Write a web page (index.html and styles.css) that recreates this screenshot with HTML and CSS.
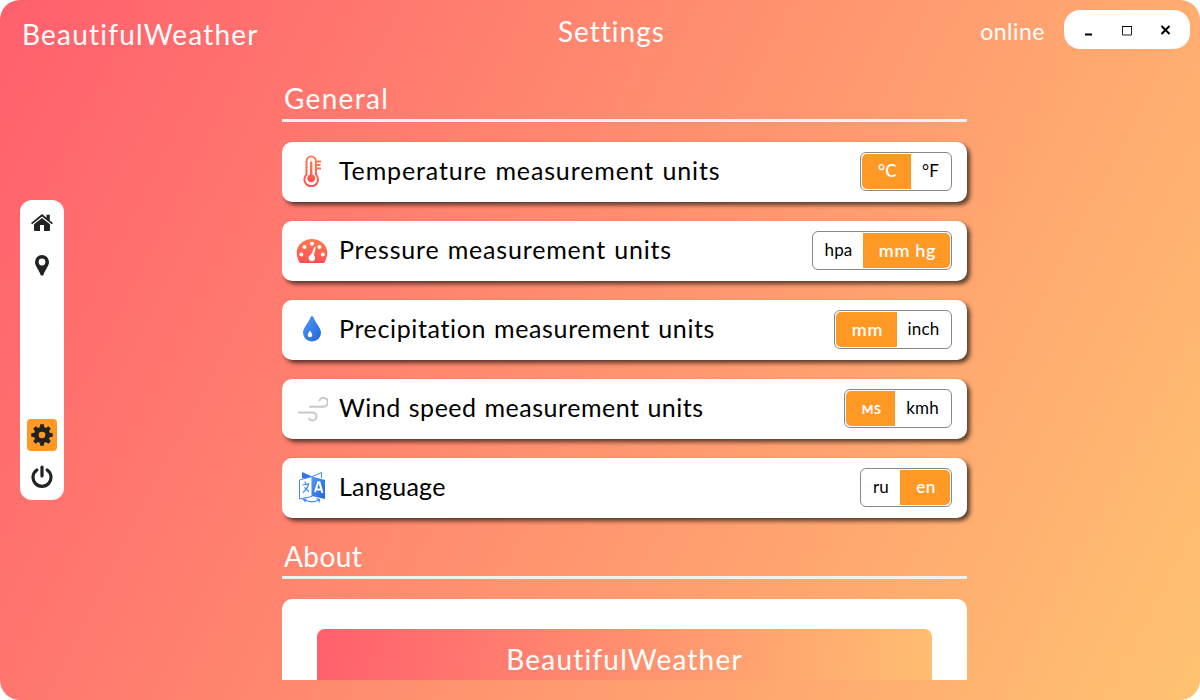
FILE: index.html
```html
<!DOCTYPE html>
<html lang="en">
<head>
<meta charset="utf-8">
<title>BeautifulWeather</title>
<link rel="stylesheet" href="styles.css">
</head>
<body>
<div class="window">
  <header class="topbar">
    <div class="brand">BeautifulWeather</div>
    <h1 class="title">Settings</h1>
    <div class="status">online</div>
    <div class="controls">
      <svg width="126" height="38" viewBox="0 0 126 38"><path d="M21 24.500h7" stroke="#000" stroke-width="2"/><path d="M58.500 16.500h9v8.500h-9z" fill="none" stroke="#222" stroke-width="1"/><path d="M58 16.500h10" stroke="#000"/><path d="M97.500 16l8 8M105.500 16l-8 8" stroke="#000" stroke-width="2"/></svg>
    </div>
  </header>
  <div class="body">
    <nav class="sidebar">
      <div class="nav-group">
        <a class="nav-item"><svg width="22" height="18" viewBox="0 0 22 18" fill="#222"><path d="M11 0l4.500 3.700V.7h3.300v5.800L22 9.100 20.900 10.300 11 2.500 1.100 10.300 0 9.100z"/><path d="M11 4l8 6.300V16q0 1-1 1h-5v-6H9v6H4q-1 0-1-1v-5.700z"/></svg></a>
        <a class="nav-item"><svg width="14" height="21" viewBox="0 0 14 21" fill="#222"><path fill-rule="evenodd" d="M7 0a7 7 0 0 1 7 7c0 4-4.500 9-5.400 12.500-.4 1.600-2.800 1.600-3.200 0C4.500 16 0 11 0 7a7 7 0 0 1 7-7zm0 3.600a3.400 3.400 0 1 0 0 6.800 3.400 3.400 0 0 0 0-6.800z"/></svg></a>
      </div>
      <div class="nav-group">
        <a class="nav-item active"><svg width="22" height="22" viewBox="-11 -11 22 22"><g fill="#222"><circle r="8"/><path id="tooth" d="M-2.300-7l.5-3.700h3.600l.5 3.700v14l-.5 3.700h-3.600l-.5-3.700z"/><use href="#tooth" transform="rotate(45)"/><use href="#tooth" transform="rotate(90)"/><use href="#tooth" transform="rotate(135)"/></g><circle r="3.300" fill="#ff9925"/></svg></a>
        <a class="nav-item"><svg width="22" height="23" viewBox="0 0 22 23" fill="none" stroke="#222" stroke-width="3.200" stroke-linecap="round"><path d="M11 2v9M5.800 5a9 9 0 1 0 10.400 0"/></svg></a>
      </div>
    </nav>
    <main class="content">
      <h2 class="heading general">General</h2>
      <section class="rows">
        <div class="row">
          <span class="icon"><svg width="32" height="32" viewBox="0 0 32 32"><defs><linearGradient id="warm" x2="0" y2="1"><stop stop-color="#ff7b50"/><stop offset="1" stop-color="#ff4f50"/></linearGradient></defs><g transform="translate(4)"><path d="M6.500 19.500V6.300a4.700 4.700 0 0 1 9.400 0v13.200a6.800 6.800 0 1 1-9.400 0z" fill="none" stroke="url(#warm)" stroke-width="2"/><path d="M10 19.500V7.500a1.200 1.200 0 0 1 2.400 0v12a4 4 0 1 1-2.400 0z" fill="url(#warm)"/><path d="M17 6.500h4M17 10h3.500M17 13.500h4" stroke="#ff704f" stroke-width="2"/></g></svg></span>
          <span class="label l1">Temperature measurement units</span>
          <div class="toggle t1"><span class="opt on">°C</span><span class="opt">°F</span></div>
        </div>
        <div class="row">
          <span class="icon"><svg width="32" height="32" viewBox="0 0 32 32"><path d="M3.600 28.400C-4 15 5 5 16 5s20 10 12.400 23.400q-.5.600-1.200.6H4.800q-.7 0-1.200-.6z" fill="url(#warm)"/><g fill="#fff"><circle cx="5.400" cy="20.500" r="2"/><circle cx="8.500" cy="13" r="2"/><circle cx="16" cy="9.700" r="2"/><circle cx="23.500" cy="13" r="2"/><circle cx="26.800" cy="20.500" r="2"/><path d="M18.500 12.700l1.300.4-1.800 8.300a3.300 3.300 0 1 1-3-.7z"/></g></svg></span>
          <span class="label l2">Pressure measurement units</span>
          <div class="toggle t2"><span class="opt">hpa</span><span class="opt on">mm hg</span></div>
        </div>
        <div class="row">
          <span class="icon"><svg width="32" height="32" viewBox="0 0 32 32"><defs><linearGradient id="blue" x2="1" y2="1"><stop stop-color="#5197fa"/><stop offset="1" stop-color="#2067d5"/></linearGradient></defs><path d="M16 3q1 0 1.600 1.600C20 11 25 15 25 20a9 8.500 0 0 1-18 0C7 15 12 11 14.400 4.600Q15 3 16 3z" fill="url(#blue)"/><path d="M14 17.500q2.300 3.200 2.300 4.500a2.300 2.300 0 0 1-4.600 0q0-1.300 2.300-4.500z" fill="#fff"/></svg></span>
          <span class="label l3">Precipitation measurement units</span>
          <div class="toggle t3"><span class="opt on">mm</span><span class="opt">inch</span></div>
        </div>
        <div class="row">
          <span class="icon"><svg width="32" height="32" viewBox="0 0 32 32" fill="none" stroke="#c5c8cd" stroke-width="2" stroke-linecap="round"><path d="M14 14.700h13a4.400 4.400 0 1 0-3.500-6.400M3 20.500h13.500a4 4 0 1 1-3.300 6.200"/></svg></span>
          <span class="label l4">Wind speed measurement units</span>
          <div class="toggle t4"><span class="opt on ms">мs</span><span class="opt">kmh</span></div>
        </div>
        <div class="row">
          <span class="icon"><svg width="32" height="32" viewBox="0 0 32 32"><path d="M6 1l10 4.500V9L6 7z" fill="#2d75e8"/><path d="M16 5.500l9.500-4V7M3.500 9L16 5.500v20L3.500 28z" fill="#fff" stroke="#4389ee" stroke-width="1"/><path d="M16 5.500L29 9v19l-13-3z" fill="url(#blue)"/><path d="M19 21l3.200-9.700h1.200L26.500 22M20.300 18.500h5" fill="none" stroke="#fff" stroke-width="2"/><path d="M9 10.500l.7 2M6.500 14l6-1.200c-.7 3.700-3 6.700-5.700 8.700M8.500 16.500l4.500 4" fill="none" stroke="#4389ee" stroke-width="1.200"/><path d="M8 28.500q8 4.500 15 .3m-2.500-1.300l3 .9-.5 3M9.500 31l-2-2.600 3-.2" fill="none" stroke="#4389ee" stroke-width="1.200"/></svg></span>
          <span class="label l5">Language</span>
          <div class="toggle t5"><span class="opt">ru</span><span class="opt on">en</span></div>
        </div>
      </section>
      <h2 class="heading about">About</h2>
      <section class="about-card"><div class="banner">BeautifulWeather</div></section>
    </main>
  </div>
</div>
</body>
</html>
```
FILE: styles.css
```css
* { box-sizing: border-box; }
body { margin: 0; background: #fff; font-family: Lato, "Open Sans", sans-serif; }
svg { display: block; }
.window { width: 1200px; height: 700px; border-radius: 20px; overflow: hidden; background: linear-gradient(117deg, #ff5f6d, #ffc371); }
.topbar { height: 80px; display: grid; grid-template-columns: 536px 151px 1fr 126px; padding: 0 10px 0 22px; color: #fff; }
.brand { margin-top: 16px; font-size: 28px; line-height: 36px; letter-spacing: 1.2px; white-space: nowrap; }
.title { margin: 13px 0 0; font-size: 28px; line-height: 36px; font-weight: 400; letter-spacing: 1px; }
.status { margin: 17px 19px 0 0; font-size: 23px; line-height: 28px; text-align: right; letter-spacing: .5px; }
.controls { width: 126px; height: 38.500px; margin-top: 10px; border-radius: 16px; background: #fff; }
.body { height: 600px; display: flex; padding-left: 20px; }
.sidebar { width: 44px; height: 300px; margin-top: 120px; padding: 7px 7px 8px; border-radius: 12px; background: #fff; display: flex; flex-direction: column; justify-content: space-between; }
.nav-group { display: flex; flex-direction: column; gap: 10px; }
.nav-group:last-child { gap: 9px; }
.nav-item { width: 30px; height: 32px; display: grid; place-items: center; border-radius: 4px; }
.active { background: #ff9925; }
.content { box-sizing: content-box; width: 685px; height: 600px; margin-left: 218px; padding-right: 8px; overflow: hidden; }
.heading { margin: 0; height: 41.500px; padding: 0 0 0 2px; border-bottom: 3px solid #eff0f2; color: #fff; font-size: 28px; line-height: 36px; font-weight: 400; }
.general { letter-spacing: 1.3px; }
.rows { display: flex; flex-direction: column; gap: 19px; padding-top: 20px; }
.row { height: 60px; border-radius: 10px; background: #fff; box-shadow: 3px 3px 4px rgba(35, 25, 20, .75); display: flex; align-items: center; padding: 0 15px 1px 14px; }
.icon { width: 32px; height: 32px; }
.label { margin: 0 0 3px 11px; font-size: 25px; line-height: 32px; color: #000; white-space: nowrap; word-spacing: 1px; }
.l1 { letter-spacing: .87px; }
.l2 { letter-spacing: .82px; }
.l3 { letter-spacing: .63px; }
.l4 { letter-spacing: .52px; }
.l5 { letter-spacing: .25px; }
.toggle { margin-left: auto; height: 39px; border: 1px solid #888; border-radius: 6px; padding: 1px; display: flex; background: #fff; }
.opt { flex: 1; display: grid; place-items: center; padding-bottom: 1px; font-size: 17px; line-height: 34px; letter-spacing: .2px; color: #000; }
.on { flex: none; padding-left: 2px; background: #ff9925; color: #fff; font-weight: 600; }
.on:first-child { border-radius: 5px 0 0 5px; }
.on:last-child { border-radius: 0 5px 5px 0; }
.t1 { width: 92px; } .t1 .on { width: 49px; }
.t2 { width: 140px; } .t2 .on { width: 87px; font-size: 18px; letter-spacing: .7px; }
.t3 { width: 118px; } .t3 .on { width: 61px; font-size: 18px; letter-spacing: .8px; }
.t4 { width: 108px; } .t4 .on { width: 49px; }
.t5 { width: 92px; } .t5 .on { width: 50px; letter-spacing: .5px; }
.about { margin-top: 20px; letter-spacing: .4px; }
.about-card { height: 360px; margin-top: 20px; padding: 30px 35px; background: #fff; border-radius: 10px; }
.banner { height: 300px; border-radius: 8px; padding-top: 12px; text-align: center; color: #fff; font-size: 28px; line-height: 36px; letter-spacing: 1.2px; background: linear-gradient(97deg, #ff5f6d, #ffc371); }
```
